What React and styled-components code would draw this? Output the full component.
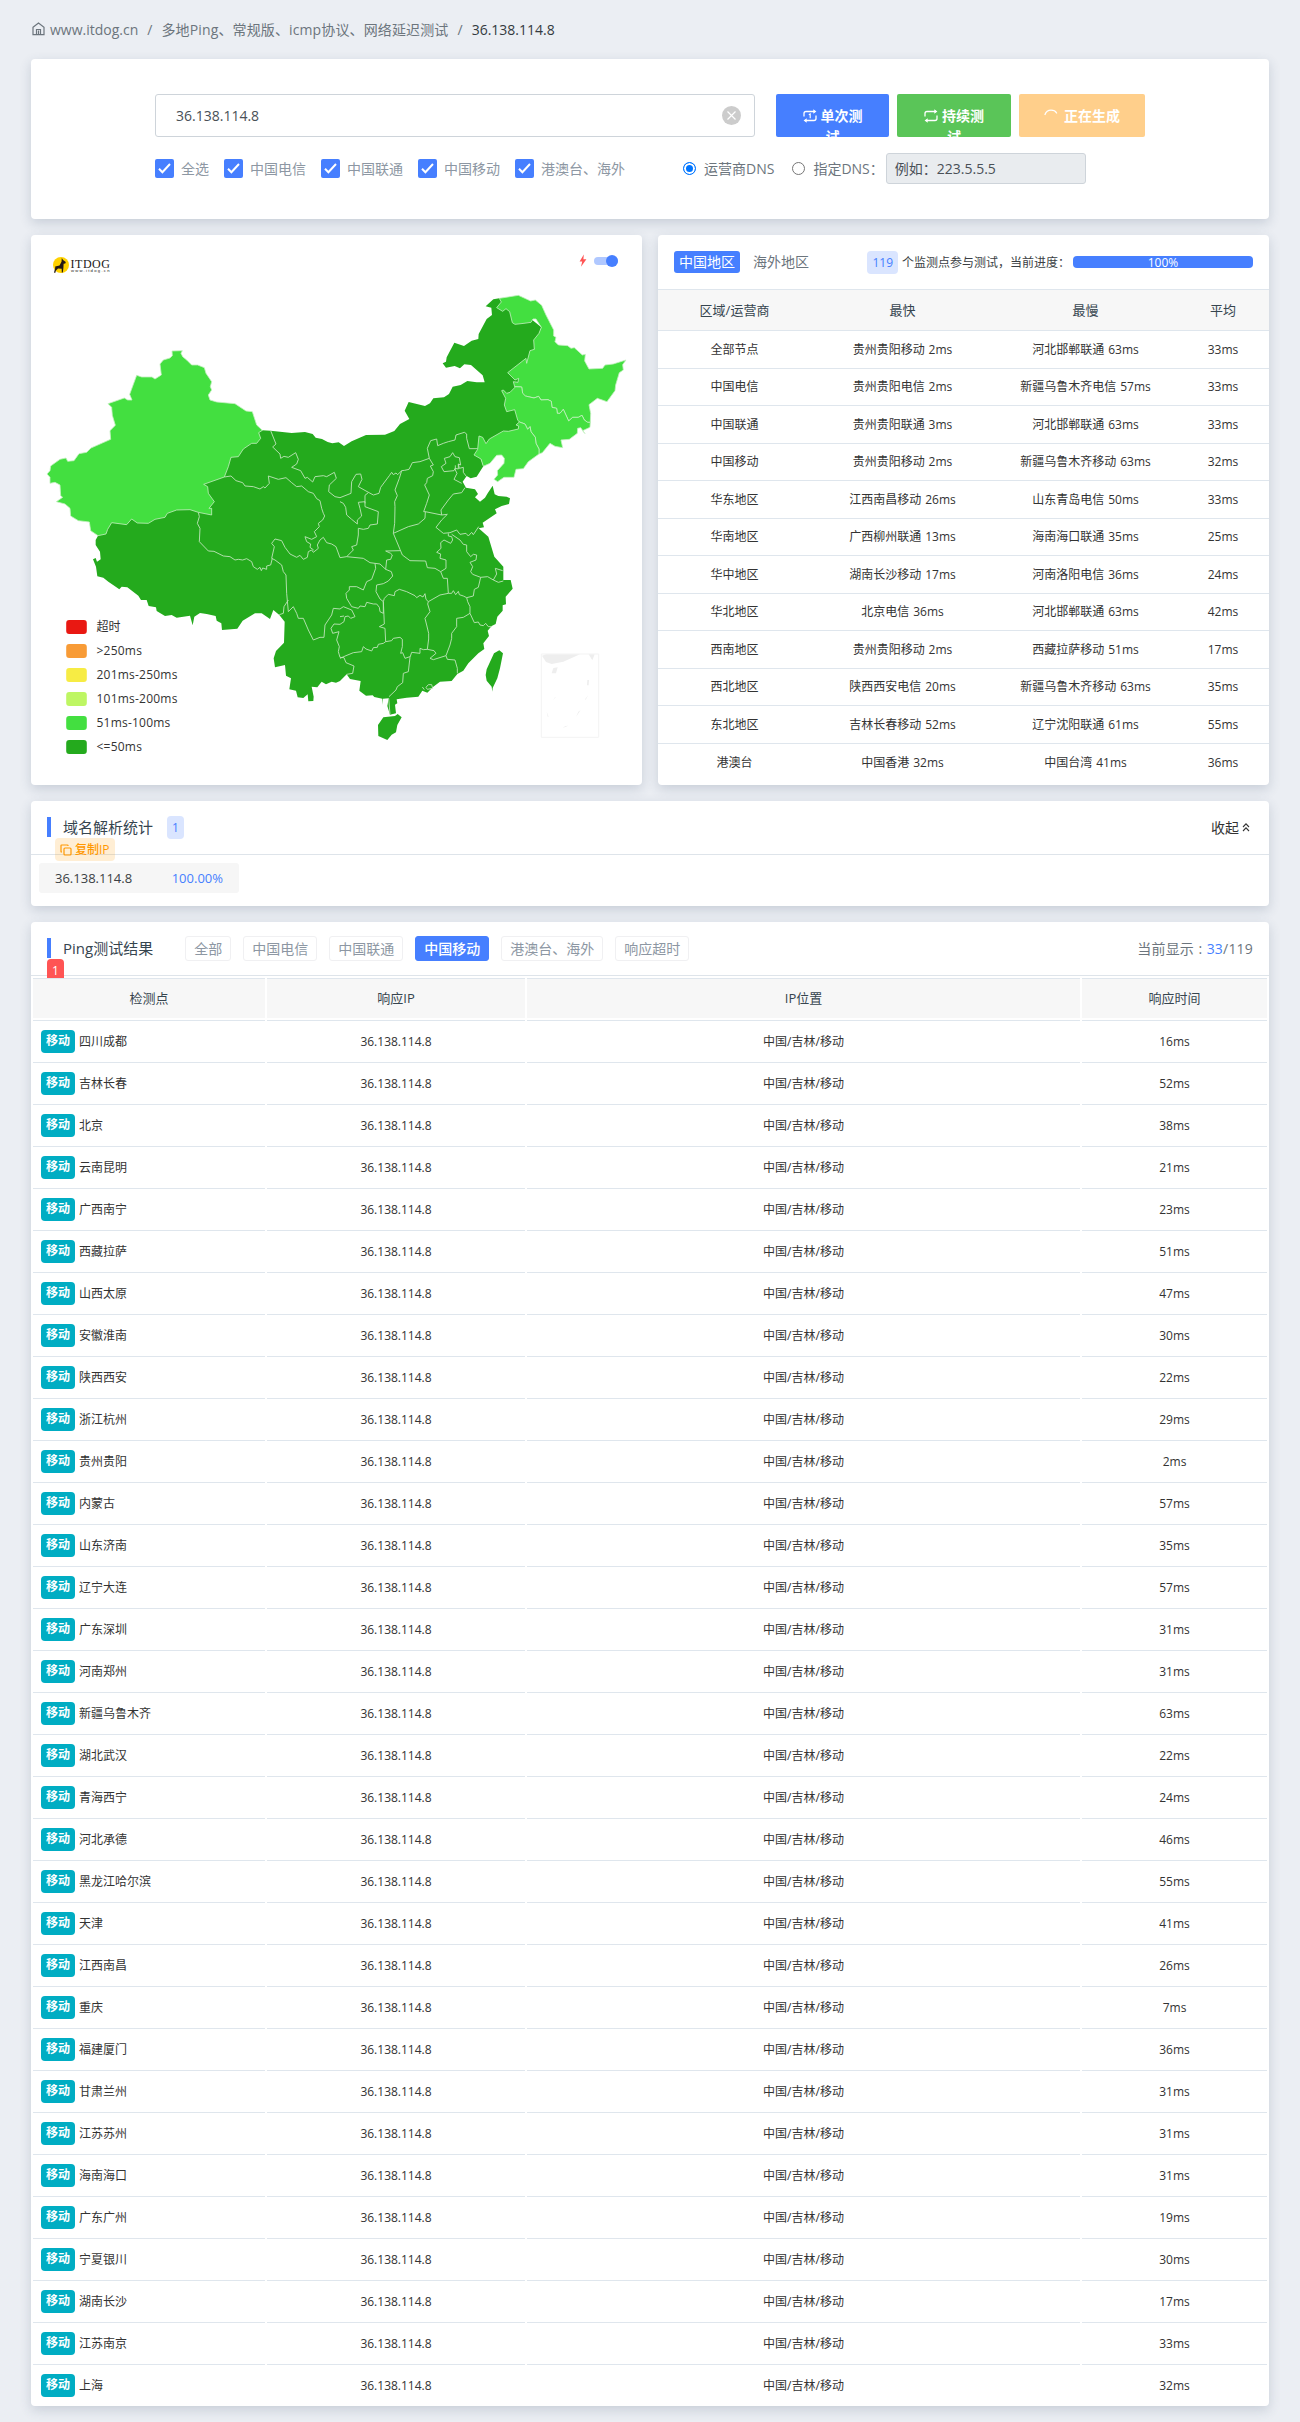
import React from "react";
import styled, { createGlobalStyle, css } from "styled-components";

const Global = createGlobalStyle`
  *, *::before, *::after { box-sizing: border-box; }
  body {
    margin: 0;
    background: #ebeef3;
    color: #3b3f44;
    font-family: "Open Sans", "Noto Sans", "Noto Sans CJK SC", sans-serif;
    font-size: 14px;
    line-height: 21px;
  }
`;

const Page = styled.main`
  width: 1300px;
  height: 2422px;
  padding: 18px 31px 0;
  overflow: hidden;
`;

const Breadcrumb = styled.nav`
  display: flex;
  align-items: center;
  height: 22px;
  padding-left: 1px;
  color: #6c757d;
  white-space: nowrap;
  svg { margin-right: 5px; }
`;
const Slash = styled.span`
  padding: 0 9px;
`;
const PageName = styled.span`
  letter-spacing: 0.13px;
`;
const Current = styled.span`
  color: #343a40;
`;

const Card = styled.section`
  background: #fff;
  border-radius: 4px;
  box-shadow: 0 4px 12px rgba(50, 70, 100, 0.19);
`;

const SearchCard = styled(Card)`
  height: 160px;
  margin-top: 19px;
  padding: 35px 123px 0 124px;
`;
const SearchRow = styled.div`
  display: flex;
  height: 43px;
`;
const Field = styled.div`
  display: flex;
  flex: none;
  align-items: center;
  justify-content: space-between;
  width: 600px;
  margin-right: 21px;
  padding: 0 13px 0 20px;
  border: 1px solid #ced4da;
  border-radius: 3px;
  color: #495057;
`;
const Action = styled.button`
  flex: none;
  height: 43px;
  width: ${(p) => p.$w}px;
  margin-right: 8px;
  padding: 11px 21px;
  border: 0;
  border-radius: 2px;
  overflow: hidden;
  display: block;
  background: ${(p) => p.$bg};
  color: #fff;
  font: bold 14px/21px "Open Sans", "Noto Sans CJK SC", sans-serif;
  text-align: center;
  svg { vertical-align: -2px; margin-right: ${(p) => p.$gap || 4}px; }
`;
const OptionRow = styled.div`
  display: flex;
  align-items: center;
  height: 31px;
  margin-top: 16px;
  color: #6c757d;
  white-space: nowrap;
`;
const Check = styled.label`
  display: flex;
  align-items: center;
  gap: 7px;
  margin-right: 15px;
  color: #8d97a3;
`;
const CheckBox = styled.span`
  display: grid;
  place-items: center;
  width: 19px;
  height: 19px;
  border-radius: 2px;
  background: #467fff;
`;
const Radio = styled.span`
  width: 13px;
  height: 13px;
  margin: 0 8px 0 ${(p) => p.$ml}px;
  border-radius: 50%;
  border: 1px solid ${(p) => (p.$on ? "#0075ff" : "#767676")};
  background: ${(p) => (p.$on ? "#0075ff" : "#fff")};
  box-shadow: ${(p) => (p.$on ? "inset 0 0 0 2px #fff" : "none")};
`;
const DnsField = styled.div`
  width: 200px;
  height: 31px;
  margin-left: 2px;
  padding: 4px 8px;
  border: 1px solid #ced4da;
  border-radius: 3px;
  background: #e9ecef;
  color: #495057;
`;

const Columns = styled.div`
  display: grid;
  grid-template-columns: 611px 611px;
  gap: 16px;
  height: 550px;
  margin: 16px 0;
`;
const MapCard = styled(Card)`
  svg { display: block; }
`;

const StatCard = styled(Card)`
  overflow: hidden;
  white-space: nowrap;
`;
const StatHead = styled.div`
  display: flex;
  align-items: center;
  height: 54px;
  padding: 0 16px;
`;
const Tab = styled.span`
  height: 22px;
  padding: 0 5px;
  margin-right: 8px;
  border-radius: 3px;
  background: ${(p) => (p.$on ? "#467fff" : "transparent")};
  color: ${(p) => (p.$on ? "#fff" : "#6c757d")};
  line-height: 21px;
`;
const SoftBadge = styled.span`
  display: inline-block;
  height: 23px;
  padding: 0 5px;
  margin-left: ${(p) => p.$ml};
  border-radius: 4px;
  background: #dae5ff;
  color: #467fff;
  font-size: 12px;
  line-height: 23px;
`;
const ProgressText = styled.span`
  width: 171px;
  margin-left: 4px;
  font-size: 12px;
`;
const Progress = styled.div`
  width: 180px;
  height: 12px;
  border-radius: 4px;
  background: #467fff;
  color: #fff;
  font-size: 12px;
  line-height: 13px;
  text-align: center;
`;
const StatRow = styled.div`
  display: grid;
  grid-template-columns: 153px 183px 183px 92px;
  align-items: center;
  height: ${(p) => (p.$head ? 41 : 37.5)}px;
  border-top: 1px solid #dfe6ed;
  background: ${(p) => (p.$head ? "#f7f7f7" : "#fff")};
  color: ${(p) => (p.$head ? "#36454f" : "#333")};
  font-size: ${(p) => (p.$head ? 13 : 12)}px;
  text-align: center;
  word-spacing: 0.8px;
  &:last-child { height: 39px; }
`;

const PanelHead = styled.header`
  display: flex;
  align-items: center;
  height: 54px;
  padding: 0 16px 1px;
  border-bottom: 1px solid #dee4ea;
  white-space: nowrap;
`;
const Title = styled.h2`
  margin: 0;
  padding-left: 12px;
  border-left: 4px solid #467fff;
  color: #36454f;
  font-size: 15px;
  font-weight: 400;
  line-height: 20px;
`;
const DnsCard = styled(Card)`
  position: relative;
  height: 105px;
`;
const Fold = styled.span`
  display: flex;
  align-items: center;
  gap: 3px;
  margin-left: auto;
  margin-right: 3px;
  color: #333;
`;
const CopyBadge = styled.span`
  position: absolute;
  left: 24px;
  top: 37px;
  display: flex;
  align-items: center;
  gap: 3px;
  height: 23px;
  padding: 0 5px;
  border-radius: 4px;
  background: rgba(255, 152, 0, 0.17);
  color: #ff9800;
  font-size: 12px;
  font-weight: 500;
`;
const IpChip = styled.div`
  display: flex;
  align-items: center;
  justify-content: space-between;
  width: 200px;
  height: 30px;
  margin: 8px 0 0 8px;
  padding: 0 16px;
  border-radius: 3px;
  background: #f6f6f6;
  font-size: 13px;
`;
const Percent = styled.span`
  color: #467fff;
`;

const ResultCard = styled(Card)`
  position: relative;
  height: 1484px;
  margin-top: 16px;
`;
const CountBadge = styled.span`
  position: absolute;
  left: 16px;
  top: 37px;
  width: 17px;
  height: 19px;
  border-radius: 4px 4px 0 0;
  background: #ff5454;
  color: #fff;
  font-size: 12px;
  line-height: 23px;
  text-align: center;
`;
const Filters = styled.div`
  display: flex;
  gap: 12px;
  margin-left: 32px;
`;
const Filter = styled.span`
  height: 25px;
  padding: 0 8px;
  border: 1px solid #f0f0f2;
  border-radius: 3px;
  color: #8d97a3;
  line-height: 23px;
  ${(p) =>
    p.$on &&
    css`
      border-color: #467fff;
      background: #467fff;
      color: #fff;
      font-weight: 500;
    `}
`;
const Shown = styled.span`
  margin-left: auto;
  color: #6c757d;
  letter-spacing: 0.2px;
  word-spacing: 0.5px;
`;
const Row = styled.div`
  display: grid;
  grid-template-columns: 232px 258px 553px 185px;
  gap: 2px;
  margin: ${(p) => (p.$head ? 2 : 0)}px 2px 2px;
`;
const Cell = styled.div`
  display: flex;
  align-items: center;
  justify-content: ${(p) => (p.$left ? "flex-start" : "center")};
  height: 40px;
  padding-top: 2px;
  padding-left: ${(p) => (p.$left ? 8 : 0)}px;
  border-top: 1px solid #dfe6ed;
  color: #333;
  font-size: 12px;
`;
const HeadCell = styled(Cell)`
  padding-top: 0;
  background: #f7f7f7;
  color: #36454f;
  font-size: 13px;
`;
const Isp = styled.span`
  height: 23px;
  margin-right: 4px;
  padding: 0 5px;
  border-radius: 4px;
  background: #00adc3;
  color: #fff;
  font-weight: 700;
  line-height: 22px;
`;

const HomeIcon = () => (
  <svg width="13" height="14" viewBox="0 0 13 14" fill="none" stroke="#6c757d" strokeWidth="1.2">
    <path d="M1 5.2 L6.5 1 L12 5.2 V12.6 H1 Z M4.5 12.6 V7.5 H8.5 V12.6 M6.5 8.5 V12.6" />
  </svg>
);
const LoopIcon = ({ one }) => (
  <svg width="14" height="14" viewBox="0 0 14 14" fill="none" stroke="#fff" strokeWidth="1.3">
    <path d="M1 7.5 V4.5 Q1 2.5 3 2.5 H12 M13 6.5 V9.5 Q13 11.5 11 11.5 H2" />
    <path d="M10.3 0.3 L13.4 2.5 L10.3 4.7 Z M3.7 9.3 L0.6 11.5 L3.7 13.7 Z" fill="#fff" stroke="none" />
    {one && <path d="M5.8 5.8 L7.2 5 V9.3" strokeWidth="1.1" />}
  </svg>
);
const SpinIcon = () => (
  <svg width="14" height="14" viewBox="0 0 14 14" fill="none" stroke="#fff" strokeWidth="1.3" strokeLinecap="round">
    <path d="M1 5.5 Q2.5 1.2 7 1.2 Q11 1.2 12.6 4" />
  </svg>
);
const ClearIcon = () => (
  <svg width="19" height="19" viewBox="0 0 19 19">
    <circle cx="9.5" cy="9.5" r="9.5" fill="#ccc" />
    <path d="M5.5 5.5 L13.5 13.5 M13.5 5.5 L5.5 13.5" stroke="#fff" strokeWidth="1.2" />
  </svg>
);
const Tick = () => (
  <svg width="13" height="11" viewBox="0 0 13 11" fill="none" stroke="#fff" strokeWidth="2">
    <path d="M1 5.8 L4.4 9.2 L12 1" />
  </svg>
);
const CopyIcon = () => (
  <svg width="12" height="12" viewBox="0 0 12 12" fill="none" stroke="#ff9800" strokeWidth="1.2">
    <rect x="4" y="4" width="7" height="7" rx="1" />
    <path d="M2 8 H1.6 Q1 8 1 7.4 V1.6 Q1 1 1.6 1 H7.4 Q8 1 8 1.6 V2" />
  </svg>
);
const UpIcon = () => (
  <svg width="8" height="10" viewBox="0 0 8 10" fill="none" stroke="#333" strokeWidth="1.1">
    <path d="M1 5 L4 1.8 L7 5 M1 9 L4 5.8 L7 9" />
  </svg>
);

const MAINLAND =
  "M697,601 722,602 785,609 825,606 848,612 857,623 876,627 893,636 907,640 926,637 942,648 965,634 1008,615 1065,614 1093,603 1110,582 1138,567 1124,542 1136,516 1185,528 1200,520 1210,505 1242,502 1257,492 1268,470 1292,465 1312,453 1340,457 1364,457 1358,436 1323,405 1303,403 1290,415 1274,408 1248,413 1238,400 1248,395 1250,382 1273,338 1302,348 1325,332 1345,327 1346,312 1370,267 1386,255 1384,233 1367,229 1390,208 1408,205 1470,240 1534,292 1500,400 1500,600 1353,687 1360,709 1340,740 1322,745 1310,738 1298,755 1308,773 1335,778 1344,792 1335,802 1350,815 1365,803 1373,790 1388,767 1394,793 1405,798 1430,800 1440,805 1437,822 1415,828 1395,838 1400,850 1358,878 1362,892 1346,895 1375,920 1393,980 1420,1010 1420,1050 1442,1050 1448,1076 1427,1100 1428,1123 1418,1126 1418,1142 1402,1160 1397,1182 1385,1188 1373,1202 1377,1218 1360,1240 1363,1257 1345,1270 1315,1300 1300,1322 1282,1332 1265,1353 1230,1355 1210,1370 1192,1388 1177,1382 1165,1400 1130,1403 1100,1408 1102,1420 1095,1424 1098,1450 1080,1454 1072,1428 1076,1405 1059,1406 1058,1425 1057,1406 1033,1401 1028,1396 1008,1397 988,1382 992,1353 960,1347 950,1333 930,1353 918,1358 905,1355 888,1363 875,1355 862,1372 845,1370 851,1400 850,1413 835,1414 833,1393 820,1404 803,1402 798,1382 778,1378 783,1345 768,1337 765,1305 735,1312 731,1285 738,1263 762,1238 764,1175 748,1155 730,1140 720,1167 695,1150 675,1150 638,1172 622,1196 576,1200 574,1180 560,1172 557,1158 530,1152 510,1149 493,1160 488,1186 480,1157 440,1163 425,1155 405,1158 380,1143 378,1132 356,1128 350,1110 333,1110 325,1097 292,1072 275,1070 268,1078 235,1055 220,1043 202,1039 198,1010 189,988 197,984 201,995 212,988 210,965 197,945 197,930 204,917 400,700Z";
const XINJIANG =
  "M697,601 680,585 667,545 648,543 615,521 560,516 540,510 535,495 545,480 541,470 545,455 528,430 523,413 503,405 485,405 470,390 458,380 453,370 457,362 426,363 427,377 420,384 400,390 390,402 394,435 375,447 366,441 335,441 320,436 299,493 306,510 293,510 283,504 234,521 245,532 247,556 256,586 240,602 242,628 183,654 170,667 147,671 132,692 113,694 108,684 90,688 62,708 60,722 51,732 60,742 60,760 75,757 90,765 92,797 98,802 79,815 105,822 120,835 122,858 145,872 178,876 182,902 204,917 228,912 233,898 245,878 290,884 305,867 322,879 355,880 375,868 405,862 412,850 440,840 480,839 505,847 545,855 545,835 537,835 553,815 535,790 533,770 521,763 583,741 595,710 603,682 625,680 640,657 665,640 680,640 692,625 686,608Z";
const HEILONGJIANG =
  "M1408,205 1465,196 1502,213 1516,210 1535,226 1548,255 1571,300 1571,318 1578,322 1575,335 1585,345 1613,347 1623,355 1633,353 1657,375 1666,373 1664,393 1677,417 1718,415 1725,405 1750,402 1788,390 1778,404 1780,420 1768,428 1757,465 1755,482 1731,515 1702,505 1677,524 1682,550 1681,577 1673,577 1663,570 1656,556 1645,562 1628,562 1616,573 1600,538 1590,550 1582,550 1580,535 1566,532 1564,514 1554,509 1533,510 1526,499 1512,504 1486,498 1478,490 1475,471 1454,470 1450,455 1464,457 1466,445 1455,450 1433,428 1488,385 1490,400 1500,362 1513,358 1511,330 1527,310 1534,292 1518,267 1509,267 1503,277 1482,280 1455,283 1447,278 1439,245 1428,236 1418,244 1400,233 1414,216Z";
const JILIN =
  "M1454,470 1475,471 1478,490 1486,498 1512,504 1526,499 1533,510 1554,509 1564,514 1566,532 1580,535 1582,550 1590,550 1600,538 1616,573 1628,562 1645,562 1656,556 1663,570 1673,577 1681,577 1680,592 1658,602 1665,611 1652,593 1643,595 1642,610 1618,628 1593,630 1598,653 1575,649 1560,640 1537,668 1527,672 1527,657 1518,640 1516,622 1503,605 1500,590 1493,598 1485,582 1468,576 1463,570 1454,539 1430,545 1423,525 1427,505 1415,482 1420,480 1430,490 1440,487 1454,473Z";
const LIAONING =
  "M1468,576 1485,582 1493,598 1500,590 1503,605 1516,622 1518,640 1527,657 1527,672 1495,695 1480,716 1458,718 1452,742 1422,742 1403,755 1392,748 1403,735 1402,722 1422,700 1423,685 1415,675 1400,676 1380,700 1360,709 1353,687 1332,675 1343,658 1347,618 1358,622 1368,641 1378,627 1420,603 1435,604 1465,597 1466,588 1458,585Z";
const HAINAN = "M1060,1462 1095,1458 1103,1452 1115,1462 1102,1485 1098,1507 1085,1514 1072,1530 1045,1518 1044,1485Z";
const TAIWAN = "M1408,1261 1419,1270 1410,1315 1402,1345 1388,1374 1387,1385 1385,1370 1370,1352 1367,1335 1370,1318 1392,1270Z";

const BORDERS = [
  "M722,602 738,642 728,651 750,672 752,685 762,679 775,682 797,668 805,688 800,702 785,712 812,722 825,745 832,742 848,756 855,740 880,737 890,740 913,727 919,745 898,765 896,785 915,800 930,803 963,790 965,755 978,733 992,732 996,748 985,770 1008,783 1030,795 1047,790 1052,772 1078,737 1085,727 1090,734 1098,729 1103,734 1115,722 1124,721 1137,718 1147,698 1170,695 1198,685 1192,655 1202,632 1220,627 1223,647 1240,640 1255,635 1275,630 1278,615 1303,607 1310,612 1310,625 1318,656 1343,656",
  "M1115,722 1108,745 1095,780 1102,797 1094,815 1095,830 1094,880 1090,910 1110,958 1117,975 1140,992 1187,993 1192,1013 1215,1015 1232,1025 1240,1045 1252,1045 1255,1090",
  "M1198,685 1210,705 1201,708 1210,725 1208,737 1192,745 1190,758 1184,765 1198,795 1190,820 1181,845 1186,845 1185,865 1165,882 1135,890 1090,910",
  "M1186,845 1235,855 M1305,773 1295,788 1270,792 1255,810 1233,840 1235,855 1252,853 1235,870 1218,892 1240,910 1260,908 1280,900 1290,913 1308,910 1315,918 1325,907 1330,914 1346,890",
  "M1268,668 1275,680 1288,683 1292,705 1285,702 1285,717 1275,715 1272,722 1242,725 1234,710 1248,700 1243,685 1260,680Z",
  "M1285,702 1288,715 1300,712 1300,727 1308,738 M1276,706 1276,720 1281,730 1272,748 1295,760",
  "M1232,1025 1248,1015 1248,990 1230,985 1232,972 1220,967 1233,955 1232,938 1242,930 1262,940 1268,930 1265,920 1255,918 1255,910",
  "M1265,913 1290,930 1300,943 1310,945 1310,965 1322,980 1330,973 1340,975 1338,990 1320,997 1328,1010 1322,1025 1328,1033 1352,1042 1373,1040 1390,1050 1400,1032 1396,1015 1418,1022",
  "M1390,1050 1405,1057 1420,1053 M1352,1042 1345,1072 1333,1078 1330,1098 1310,1103",
  "M1255,1090 1265,1090 1270,1082 1277,1094 1285,1084 1288,1094 1300,1098 1310,1103 1313,1115 1320,1130 1320,1150 1300,1162 1280,1165 1280,1190 1265,1210 1265,1225 1260,1245 1248,1277",
  "M1255,1090 1230,1095 1195,1115 1188,1108 1185,1091 1179,1101 1170,1096 1160,1103 1155,1097 1130,1085 1108,1078 1095,1085 1093,1097 1075,1093 1063,1105 1060,1115",
  "M1195,1115 1193,1122 1200,1145 1185,1165 1190,1185 1196,1210 1196,1227 1192,1258",
  "M1320,1150 1333,1178 1345,1176 1350,1185 1360,1187 1367,1180 1375,1190 1385,1190",
  "M1140,1282 1145,1267 1170,1270 1170,1255 1180,1259 1192,1258 1212,1262 1218,1270 1200,1285 1210,1289 1248,1277 1252,1288 1275,1290 1282,1315 1282,1330",
  "M1140,1282 1135,1325 1120,1330 1118,1358 1102,1370 1098,1380 1077,1400",
  "M1067,1235 1085,1232 1090,1225 1110,1222 1117,1228 1117,1250 1112,1270 1118,1268 1125,1285 1140,1280",
  "M1067,1235 1060,1240 1045,1243 1042,1252 1030,1253 1025,1263 1008,1257 1000,1250 995,1265 970,1268 948,1277 930,1285",
  "M1067,1235 1065,1195 1048,1190 1063,1182 1060,1115 1060,1150 1050,1145 1048,1132 1040,1122 1030,1122 1010,1117 1005,1130 990,1128 985,1135 965,1130 950,1105 948,1090 958,1080 958,1070 980,1070 1000,1080 1010,1055 1025,1048 1037,1015 1035,1000",
  "M1060,1115 1050,1107 1038,1085 1040,1065 1060,1061 1075,1053 1088,1038 1084,1025 1067,1018 1070,990 1082,988 1087,975 1082,970 1067,963 1110,962",
  "M1067,1018 1050,1002 1035,1000 1020,998 1000,985 950,980 930,983 918,950 905,942 890,938 880,922 870,930 862,945 865,955 850,967 845,960 835,965 832,982 820,988 810,976 800,982 780,972 765,952 755,932 735,927 725,940 733,950 725,985",
  "M725,985 735,990 755,1005 760,1025 768,1035 770,1090 775,1145 790,1130 800,1150 805,1165 820,1165 835,1200 850,1230 870,1222 882,1222 885,1185 905,1155 910,1135 930,1137 940,1130 965,1140 975,1160 962,1165 955,1158 945,1160 942,1175 930,1183 912,1182 903,1195 908,1210 927,1205 920,1230 928,1250 925,1265 930,1282 942,1283 948,1298 972,1308 968,1330 950,1333",
  "M775,1110 762,1130 760,1150 748,1154 M930,1160 942,1158",
  "M505,847 508,860 502,880 510,895 508,935 535,963 552,964 580,978 600,980 615,990 625,988 638,990 650,986 665,995 670,1010 682,1018 690,1012 694,1022 698,1014 710,1018 710,1008 722,1005 727,985",
  "M583,741 603,738 618,752 638,758 645,768 670,770 690,777 700,770 705,774 718,760 715,738 745,748 768,743 785,758 800,770 815,768 835,785 850,790 860,806 870,812 875,835 880,850 884,858 878,870 865,880 868,890 853,905 860,920 845,928 825,920 830,935 842,942 840,952 851,960",
  "M930,815 940,820 947,832 950,855 965,868 982,882 982,870 995,858 990,835 985,817 1005,815 1005,830 1045,845 1042,882 1020,885 1015,895 1000,898 985,895 985,915 980,945 965,950 970,960 950,980",
  "M1005,820 1005,796 1015,788 M1076,1405 1080,1453",
  "M1188,1372 1195,1364 1205,1364 1208,1375 1192,1378Z M1177,1371 1183,1379",
];

const LEGEND = [
  ["超时", "#e91812"],
  [">250ms", "#f89b36"],
  ["201ms-250ms", "#f7ec44"],
  ["101ms-200ms", "#bef663"],
  ["51ms-100ms", "#43df40"],
  ["<=50ms", "#24aa1d"],
];

const ChinaMap = () => (
  <svg width="611" height="550" viewBox="31 235 611 550">
    <g transform="translate(30 230) scale(0.33333)" strokeLinejoin="round">
      <path d={MAINLAND} fill="#24aa1d" />
      <path d={HAINAN} fill="#24aa1d" />
      <path d={TAIWAN} fill="#24aa1d" />
      <g fill="#43df40">
        <path d={HEILONGJIANG} stroke="#c4f0c0" strokeWidth="2.4" />
        <path d={JILIN} stroke="#c4f0c0" strokeWidth="2.4" />
        <path d={LIAONING} stroke="#c4f0c0" strokeWidth="2.4" />
        <path d={XINJIANG} stroke="#c4f0c0" strokeWidth="2.4" />
      </g>
      <path d={BORDERS.join(" ")} fill="none" stroke="#b9e3b4" strokeWidth="2.8" />
      <g fill="#eee">
        <path d="M1536,1277 1548,1273 1650,1273 1600,1295 1565,1302 1548,1296Z M1676,1273 1694,1273 1687,1291Z M1570,1314 1583,1312 1578,1330 1565,1330Z M1672,1350 1677,1350 1676,1366 1671,1366Z M1675,1395 1667,1409 1665,1408Z M1652,1440 1638,1461 1645,1445Z M1698,1290 1690,1306Z M1550,1445 1556,1460 1553,1460Z M1578,1400 1568,1412 1575,1402Z M1615,1487 1598,1494 1606,1488Z" />
        <path d="M1534,1272H1706V1522H1534Z" fill="none" stroke="#f3f3f3" strokeWidth="3" />
      </g>
    </g>
    <circle cx="61" cy="265" r="8" fill="#ffd200" />
    <path d="M54 272.5 L55.2 268 L55.2 266.5 L59.5 265.4 L61.5 261.8 L61.8 258 L63 260 L65.8 262 L65.3 263.4 L63.6 263.8 L63.4 268 L62.8 272.6 L61.8 272.6 L61.7 268.8 L58 268.6 L56 270.5 L55.2 273 Z" fill="#231815" />
    <text x="70.5" y="267.5" fontFamily="Liberation Serif, serif" fontSize="12" textLength="39.5" fill="#231815">ITDOG</text>
    <text x="71" y="272" fontFamily="Liberation Sans, sans-serif" fontSize="4.2" textLength="38.5" fill="#231815">www.itdog.cn</text>
    <path d="M583.8 254.5 L579.6 261.4 H582.2 L581 266.8 L586.4 259.2 H583.4 Z" fill="#ff5454" />
    <rect x="594" y="257" width="24" height="8" rx="4" fill="#b0c8ff" />
    <circle cx="612" cy="261" r="6" fill="#467fff" />
    {LEGEND.map(([label, color], i) => (
      <g key={label}>
        <rect x="66.2" y={620 + i * 24} width="20.6" height="14" rx="3" fill={color} />
        <text x="96.5" y={630.5 + i * 24} fontSize="12" letterSpacing={i ? 0.22 : 0} fill="#333">
          {label}
        </text>
      </g>
    ))}
  </svg>
);

const STATS = [
  ["全部节点", "贵州贵阳移动 2ms", "河北邯郸联通 63ms", "33ms"],
  ["中国电信", "贵州贵阳电信 2ms", "新疆乌鲁木齐电信 57ms", "33ms"],
  ["中国联通", "贵州贵阳联通 3ms", "河北邯郸联通 63ms", "33ms"],
  ["中国移动", "贵州贵阳移动 2ms", "新疆乌鲁木齐移动 63ms", "32ms"],
  ["华东地区", "江西南昌移动 26ms", "山东青岛电信 50ms", "33ms"],
  ["华南地区", "广西柳州联通 13ms", "海南海口联通 35ms", "25ms"],
  ["华中地区", "湖南长沙移动 17ms", "河南洛阳电信 36ms", "24ms"],
  ["华北地区", "北京电信 36ms", "河北邯郸联通 63ms", "42ms"],
  ["西南地区", "贵州贵阳移动 2ms", "西藏拉萨移动 51ms", "17ms"],
  ["西北地区", "陕西西安电信 20ms", "新疆乌鲁木齐移动 63ms", "35ms"],
  ["东北地区", "吉林长春移动 52ms", "辽宁沈阳联通 61ms", "55ms"],
  ["港澳台", "中国香港 32ms", "中国台湾 41ms", "36ms"],
];

const RESULTS = [
  ["四川成都", 16], ["吉林长春", 52], ["北京", 38], ["云南昆明", 21], ["广西南宁", 23],
  ["西藏拉萨", 51], ["山西太原", 47], ["安徽淮南", 30], ["陕西西安", 22], ["浙江杭州", 29],
  ["贵州贵阳", 2], ["内蒙古", 57], ["山东济南", 35], ["辽宁大连", 57], ["广东深圳", 31],
  ["河南郑州", 31], ["新疆乌鲁木齐", 63], ["湖北武汉", 22], ["青海西宁", 24], ["河北承德", 46],
  ["黑龙江哈尔滨", 55], ["天津", 41], ["江西南昌", 26], ["重庆", 7], ["福建厦门", 36],
  ["甘肃兰州", 31], ["江苏苏州", 31], ["海南海口", 31], ["广东广州", 19], ["宁夏银川", 30],
  ["湖南长沙", 17], ["江苏南京", 33], ["上海", 32],
];

const FILTERS = ["全部", "中国电信", "中国联通", "中国移动", "港澳台、海外", "响应超时"];

export default function App() {
  return (
    <Page>
      <Global />
      <Breadcrumb>
        <HomeIcon />
        www.itdog.cn<Slash>/</Slash>
        <PageName>多地Ping、常规版、icmp协议、网络延迟测试</PageName>
        <Slash>/</Slash>
        <Current>36.138.114.8</Current>
      </Breadcrumb>

      <SearchCard>
        <SearchRow>
          <Field>
            36.138.114.8
            <ClearIcon />
          </Field>
          <Action $w={113} $bg="#467fff"><LoopIcon one />单次测试</Action>
          <Action $w={114} $bg="#5ac558"><LoopIcon />持续测试</Action>
          <Action $w={126} $bg="#ffcf8b" $gap={6}><SpinIcon />正在生成</Action>
        </SearchRow>
        <OptionRow>
          {["全选", "中国电信", "中国联通", "中国移动", "港澳台、海外"].map((t) => (
            <Check key={t}>
              <CheckBox><Tick /></CheckBox>
              {t}
            </Check>
          ))}
          <Radio $on $ml={43} />运营商DNS
          <Radio $ml={18} />指定DNS：
          <DnsField>例如：223.5.5.5</DnsField>
        </OptionRow>
      </SearchCard>

      <Columns>
        <MapCard><ChinaMap /></MapCard>
        <StatCard>
          <StatHead>
            <Tab $on>中国地区</Tab>
            <Tab>海外地区</Tab>
            <SoftBadge $ml="auto">119</SoftBadge>
            <ProgressText>个监测点参与测试，当前进度：</ProgressText>
            <Progress>100%</Progress>
          </StatHead>
          <StatRow $head>
            <span>区域/运营商</span><span>最快</span><span>最慢</span><span>平均</span>
          </StatRow>
          {STATS.map((r) => (
            <StatRow key={r[0]}>
              {r.map((c, i) => <span key={i}>{c}</span>)}
            </StatRow>
          ))}
        </StatCard>
      </Columns>

      <DnsCard>
        <PanelHead>
          <Title>域名解析统计</Title>
          <SoftBadge $ml="14px">1</SoftBadge>
          <Fold>收起<UpIcon /></Fold>
        </PanelHead>
        <CopyBadge><CopyIcon />复制IP</CopyBadge>
        <IpChip>
          36.138.114.8<Percent>100.00%</Percent>
        </IpChip>
      </DnsCard>

      <ResultCard>
        <PanelHead>
          <Title>Ping测试结果</Title>
          <Filters>
            {FILTERS.map((f) => <Filter key={f} $on={f === "中国移动"}>{f}</Filter>)}
          </Filters>
          <Shown>当前显示 : <Percent>33</Percent>/119</Shown>
        </PanelHead>
        <CountBadge>1</CountBadge>
        <Row $head>
          <HeadCell>检测点</HeadCell>
          <HeadCell>响应IP</HeadCell>
          <HeadCell>IP位置</HeadCell>
          <HeadCell>响应时间</HeadCell>
        </Row>
        {RESULTS.map(([name, ms]) => (
          <Row key={name}>
            <Cell $left><Isp>移动</Isp>{name}</Cell>
            <Cell>36.138.114.8</Cell>
            <Cell>中国/吉林/移动</Cell>
            <Cell>{ms}ms</Cell>
          </Row>
        ))}
      </ResultCard>
    </Page>
  );
}
